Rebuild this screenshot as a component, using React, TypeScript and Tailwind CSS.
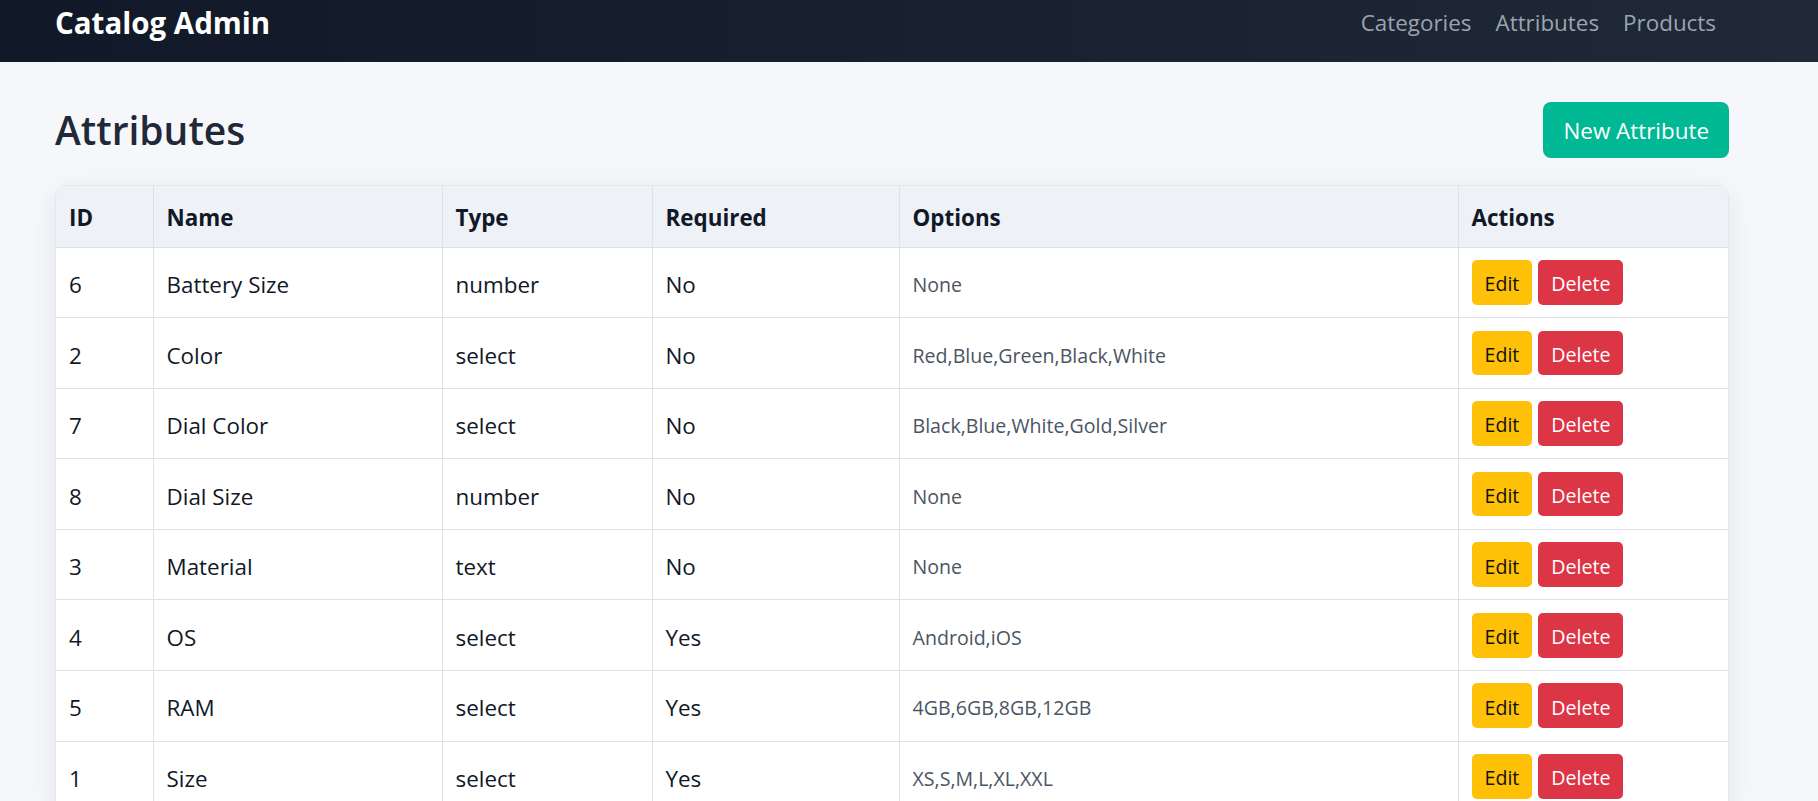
import React from "react";

type Attr = {
  id: number;
  name: string;
  type: string;
  required: boolean;
  options: string | null;
};

const attributes: Attr[] = [
  { id: 6, name: "Battery Size", type: "number", required: false, options: null },
  { id: 2, name: "Color", type: "select", required: false, options: "Red,Blue,Green,Black,White" },
  { id: 7, name: "Dial Color", type: "select", required: false, options: "Black,Blue,White,Gold,Silver" },
  { id: 8, name: "Dial Size", type: "number", required: false, options: null },
  { id: 3, name: "Material", type: "text", required: false, options: null },
  { id: 4, name: "OS", type: "select", required: true, options: "Android,iOS" },
  { id: 5, name: "RAM", type: "select", required: true, options: "4GB,6GB,8GB,12GB" },
  { id: 1, name: "Size", type: "select", required: true, options: "XS,S,M,L,XL,XXL" },
];

function App() {
  return (
    <div
      className="min-h-screen bg-[#f5f7fb] text-[#111827]"
      style={{ fontFamily: '"Open Sans", "Noto Sans", sans-serif' }}
    >
      {/* Navbar */}
      <nav className="h-[62px] bg-gradient-to-r from-[#111827] to-[#1f2937] pl-[55px] pr-[102px] flex justify-between items-start">
        <h1 className="text-[29.5px] leading-[45px] font-bold text-white">Catalog Admin</h1>
        <div className="flex gap-[24px] text-[22.4px] leading-[45px] text-[#9ca3af]">
          <a href="#">Categories</a>
          <a href="#">Attributes</a>
          <a href="#">Products</a>
        </div>
      </nav>

      {/* Page Content */}
      <main className="pt-[40px] pl-[55px] pr-[89px]">
        <div className="flex justify-between items-center mb-[27px]">
          <h2 className="text-[39px] leading-[50px] font-semibold text-[#1f2937]">Attributes</h2>
          <button className="bg-[#00b894] text-white text-[22.4px] leading-[33.6px] px-[20px] pt-[12.4px] pb-[10px] rounded-[8px]">
            New Attribute
          </button>
        </div>

        <div className="bg-white rounded-[12px] overflow-hidden border border-[#e3e6eb] shadow-[0_6px_28px_rgba(15,23,42,0.08)]">
          <table className="w-full table-fixed border-collapse text-left">
            <thead className="bg-[#eef1f6]">
              <tr className="text-[22.4px] leading-[33.6px] font-bold text-[#111827]">
                <th className="w-[97px] px-[13px] pt-[15.5px] pb-[11.5px] border-r border-b border-[#dee2e6]">ID</th>
                <th className="w-[289px] px-[13px] pt-[15.5px] pb-[11.5px] border-r border-b border-[#dee2e6]">Name</th>
                <th className="w-[210px] px-[13px] pt-[15.5px] pb-[11.5px] border-r border-b border-[#dee2e6]">Type</th>
                <th className="w-[247px] px-[13px] pt-[15.5px] pb-[11.5px] border-r border-b border-[#dee2e6]">Required</th>
                <th className="w-[559px] px-[13px] pt-[15.5px] pb-[11.5px] border-r border-b border-[#dee2e6]">Options</th>
                <th className="px-[13px] pt-[15.5px] pb-[11.5px] border-b border-[#dee2e6]">Actions</th>
              </tr>
            </thead>
            <tbody>
              {attributes.map((a) => (
                <tr key={a.id} className="text-[22.4px] leading-[33.6px]">
                  <td className="px-[13px] pt-[15px] pb-[10px] border-r border-b border-[#dee2e6]">{a.id}</td>
                  <td className="px-[13px] pt-[15px] pb-[10px] border-r border-b border-[#dee2e6]">{a.name}</td>
                  <td className="px-[13px] pt-[15px] pb-[10px] border-r border-b border-[#dee2e6]">{a.type}</td>
                  <td className="px-[13px] pt-[15px] pb-[10px] border-r border-b border-[#dee2e6]">
                    {a.required ? "Yes" : "No"}
                  </td>
                  <td className="px-[13px] pt-[15px] pb-[10px] border-r border-b border-[#dee2e6] text-[19.6px] text-[#4b5563]">
                    {a.options ?? "None"}
                  </td>
                  <td className="px-[13px] py-[12.4px] border-b border-[#dee2e6]">
                    <div className="flex gap-[6px]">
                      <button className="bg-[#ffc107] text-[#111] text-[19.6px] leading-[28px] px-[13px] pt-[10.4px] pb-[6.4px] rounded-[5px]">
                        Edit
                      </button>
                      <button className="bg-[#dc3545] text-white text-[19.6px] leading-[28px] px-[13px] pt-[10.4px] pb-[6.4px] rounded-[5px]">
                        Delete
                      </button>
                    </div>
                  </td>
                </tr>
              ))}
            </tbody>
          </table>
        </div>
      </main>
    </div>
  );
}

export default App;
